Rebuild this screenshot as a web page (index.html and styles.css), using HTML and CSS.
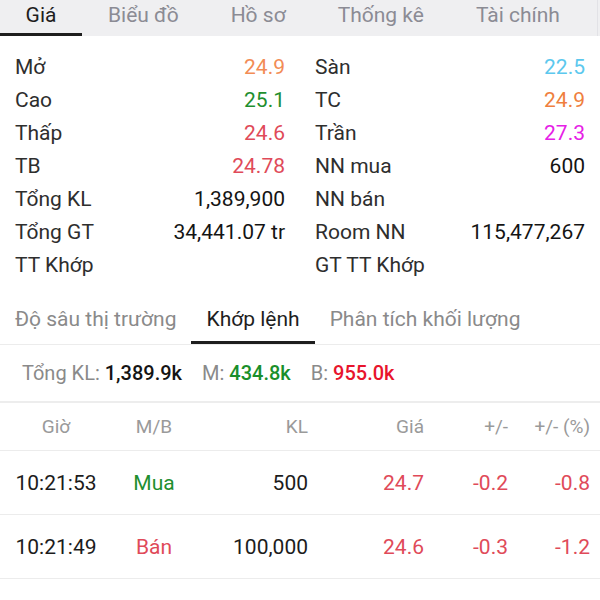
FILE: index.html
```html
<!DOCTYPE html>
<html lang="vi">
<head>
<meta charset="utf-8">
<title>Giá</title>
<link rel="stylesheet" href="styles.css">
</head>
<body>
<div class="app">
  <nav class="tabbar">
    <div class="tab active">Giá</div>
    <div class="tab">Biểu đồ</div>
    <div class="tab">Hồ sơ</div>
    <div class="tab">Thống kê</div>
    <div class="tab">Tài chính</div>
    <div class="tab-spacer"></div>
  </nav>

  <section class="info">
    <div class="col">
      <div class="row"><span class="lbl">Mở</span><span class="val c-open">24.9</span></div>
      <div class="row"><span class="lbl">Cao</span><span class="val c-green">25.1</span></div>
      <div class="row"><span class="lbl">Thấp</span><span class="val c-red">24.6</span></div>
      <div class="row"><span class="lbl">TB</span><span class="val c-red">24.78</span></div>
      <div class="row"><span class="lbl">Tổng KL</span><span class="val">1,389,900</span></div>
      <div class="row"><span class="lbl">Tổng GT</span><span class="val">34,441.07 tr</span></div>
      <div class="row"><span class="lbl">TT Khớp</span><span class="val"></span></div>
    </div>
    <div class="col">
      <div class="row"><span class="lbl">Sàn</span><span class="val c-cyan">22.5</span></div>
      <div class="row"><span class="lbl">TC</span><span class="val c-orange">24.9</span></div>
      <div class="row"><span class="lbl">Trần</span><span class="val c-magenta">27.3</span></div>
      <div class="row"><span class="lbl">NN mua</span><span class="val">600</span></div>
      <div class="row"><span class="lbl">NN bán</span><span class="val"></span></div>
      <div class="row"><span class="lbl">Room NN</span><span class="val">115,477,267</span></div>
      <div class="row"><span class="lbl">GT TT Khớp</span><span class="val"></span></div>
    </div>
  </section>

  <nav class="subtabs">
    <div class="subtab">Độ sâu thị trường</div>
    <div class="subtab active">Khớp lệnh</div>
    <div class="subtab">Phân tích khối lượng</div>
  </nav>

  <div class="summary"><span class="s-lbl">Tổng KL: </span><span class="s-val">1,389.9k</span><span class="s-lbl s-gap">M: </span><span class="s-val s-green">434.8k</span><span class="s-lbl s-gap">B: </span><span class="s-val s-red">955.0k</span></div>

  <div class="table">
    <div class="trow thead">
      <div class="cell center">Giờ</div>
      <div class="cell center">M/B</div>
      <div class="cell right">KL</div>
      <div class="cell right">Giá</div>
      <div class="cell right">+/-</div>
      <div class="cell right">+/- (%)</div>
    </div>
    <div class="trow">
      <div class="cell center">10:21:53</div>
      <div class="cell center c-green">Mua</div>
      <div class="cell right">500</div>
      <div class="cell right c-red">24.7</div>
      <div class="cell right c-red">-0.2</div>
      <div class="cell right c-red">-0.8</div>
    </div>
    <div class="trow">
      <div class="cell center">10:21:49</div>
      <div class="cell center c-red">Bán</div>
      <div class="cell right">100,000</div>
      <div class="cell right c-red">24.6</div>
      <div class="cell right c-red">-0.3</div>
      <div class="cell right c-red">-1.2</div>
    </div>
  </div>
</div>
</body>
</html>
```

FILE: styles.css
```css
* { box-sizing: border-box; }
html, body { margin: 0; padding: 0; background: #fff; }
body {
  font-family: Roboto, "Noto Sans", "Liberation Sans", sans-serif;
  color: #1c1c1c;
  width: 600px;
  height: 600px;
  overflow: hidden;
}

.tabbar {
  display: flex;
  height: 36px;
  background: #efeff1;
}
.tab {
  padding: 0 26px;
  font-size: 21px;
  line-height: 30px;
  color: #8b8b94;
  border-bottom: 3px solid transparent;
  white-space: nowrap;
}
.tab.active {
  color: #1e1e1e;
  border-bottom-color: #1e1e1e;
  padding: 0 25px;
  width: 82px;
  text-align: center;
}
.tab-spacer {
  flex: 1;
  border-right: 1px solid #e2e2e6;
  margin-right: 2px;
}

.info {
  display: grid;
  grid-template-columns: 1fr 1fr;
  column-gap: 30px;
  padding: 14px 15px 0;
}
.row {
  display: flex;
  justify-content: space-between;
  align-items: center;
  height: 33px;
  font-size: 21px;
}
.lbl { color: #2e2e2e; }
.val { color: #141414; }

.c-open { color: #f28c55; }
.c-orange { color: #ef7f3e; }
.c-green { color: #1f8f2f; }
.c-red { color: #e04a59; }
.c-cyan { color: #5cc8ee; }
.c-magenta { color: #e620e6; }

.subtabs {
  display: flex;
  margin-top: 16px;
  border-bottom: 1px solid #ececec;
}
.subtab {
  padding: 0 15px;
  font-size: 21px;
  line-height: 44px;
  color: #8a8a8a;
  border-bottom: 3px solid transparent;
  white-space: nowrap;
}
.subtab.active {
  color: #1e1e1e;
  border-bottom-color: #1e1e1e;
}

.summary {
  height: 58px;
  line-height: 57px;
  padding-left: 22px;
  font-size: 20px;
  border-bottom: 2px solid #ededed;
  white-space: pre;
}
.s-lbl { color: #8a8a8a; }
.s-val { color: #141414; font-weight: 500; }
.s-gap { margin-left: 20px; }
.s-green { color: #1a8f2a; }
.s-red { color: #e8142c; }

.table { display: flex; flex-direction: column; }
.trow {
  display: grid;
  grid-template-columns: 112px 84px 112px 116px 84px 82px;
  padding-right: 10px;
  height: 64px;
  align-items: center;
  font-size: 21px;
  border-bottom: 1px solid #ececec;
}
.trow.thead {
  height: 48px;
  font-size: 19px;
  color: #9a9a9a;
}
.cell { white-space: nowrap; }
.center { text-align: center; }
.right { text-align: right; }
```
